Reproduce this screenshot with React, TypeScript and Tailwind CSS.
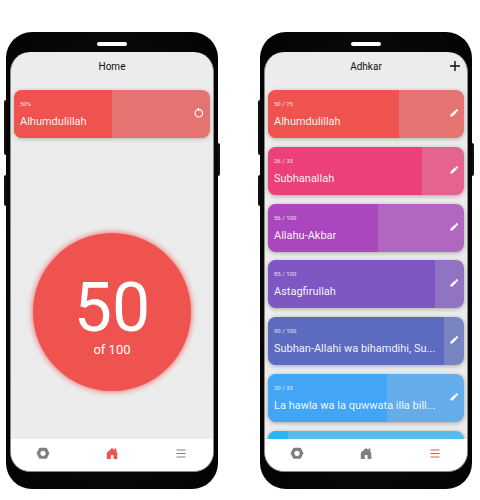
import type { ReactNode } from "react";

type Dhikr = {
  title: string;
  label: string;
  done: number;
  total: number;
  fill: string;
  track: string;
  glow: string;
};

const adhkar: Dhikr[] = [
  { title: "Alhumdulillah", label: "50 / 75", done: 50, total: 75, fill: "bg-[#ef5350]", track: "bg-[#e57371]", glow: "shadow-[#000000]/25" },
  { title: "Subhanallah", label: "26 / 33", done: 26, total: 33, fill: "bg-[#ec407a]", track: "bg-[#e4638f]", glow: "shadow-[#000000]/30" },
  { title: "Allahu-Akbar", label: "56 / 100", done: 56, total: 100, fill: "bg-[#ab47bc]", track: "bg-[#b167bf]", glow: "shadow-[#000000]/30" },
  { title: "Astagfirullah", label: "85 / 100", done: 85, total: 100, fill: "bg-[#7e57c2]", track: "bg-[#9073c3]", glow: "shadow-[#000000]/30" },
  { title: "Subhan-Allahi wa bihamdihi, Su...", label: "90 / 100", done: 90, total: 100, fill: "bg-[#5c6bc0]", track: "bg-[#7883c1]", glow: "shadow-[#000000]/30" },
  { title: "La hawla wa la quwwata illa bill...", label: "20 / 33", done: 20, total: 33, fill: "bg-[#42a5f5]", track: "bg-[#64adea]", glow: "shadow-[#000000]/30" },
  { title: "", label: "", done: 10, total: 100, fill: "bg-[#29b6f6]", track: "bg-[#54bdef]", glow: "shadow-[#000000]/30" },
];

function ResetIcon() {
  return (
    <svg viewBox="0 0 12 12" className="size-3" aria-hidden="true">
      <path d="M3.600 3.200A3.800 3.800 0 1 0 7.600 2.900L5 2.500" fill="none" stroke="currentColor" strokeWidth="1.100" />
      <path d="M3.200 2.300 6 .7v3.600z" fill="currentColor" />
    </svg>
  );
}

function PencilIcon() {
  return (
    <svg viewBox="0 0 10 10" className="size-[10px]" fill="currentColor" aria-hidden="true">
      <path d="M1.400 6.700 5.900 2.600 7.600 4.400 3.200 8.500H1.400zM6.300 2.200 7.300 1.300a.6.600 0 0 1 .8 0l.8.800a.6.600 0 0 1 0 .9L8 4z" />
    </svg>
  );
}

function SettingsIcon() {
  return (
    <svg viewBox="0 0 16 16" className="size-4" aria-hidden="true">
      <path
        fill="currentColor"
        fillRule="evenodd"
        d="M5 2.800h6a1 1 0 0 1 .9.5l2.300 4.500a1 1 0 0 1 0 1L11.900 13.300a1 1 0 0 1-.9.500H5a1 1 0 0 1-.9-.5L1.800 8.800a1 1 0 0 1 0-1L4.100 3.300a1 1 0 0 1 .9-.5zM8 5.700a2.600 2.600 0 1 0 0 5.200 2.600 2.600 0 0 0 0-5.200z"
      />
    </svg>
  );
}

function HomeIcon() {
  return (
    <svg viewBox="0 0 16 16" className="size-4" fill="currentColor" aria-hidden="true">
      <path d="M8 2.900 10.500 5V3.600h1.900v3.100l.9 1.100v5.700a.6.600 0 0 1-.6.600H9.600V10.600a.7.700 0 0 0-.7-.7H7.500a.7.700 0 0 0-.7.700v3.500H3.400a.6.600 0 0 1-.6-.6V7.800z" />
    </svg>
  );
}

function ListIcon() {
  return (
    <svg viewBox="0 0 16 16" className="size-4" stroke="currentColor" strokeWidth="1" aria-hidden="true">
      <path d="M3.500 5h9M3.500 8.500h9M3.500 12h9" />
    </svg>
  );
}

function DhikrCard({ item, action, icon }: { item: Dhikr; action: string; icon: ReactNode }) {
  const progress = `${(item.done / item.total) * 100}%`;
  return (
    <div className={`rounded-lg shadow-[0_1px_4px] ${item.glow}`}>
      <article className={`relative h-12 overflow-hidden rounded-lg ${item.track}`}>
        <div className={`h-full ${item.fill}`} style={{ width: progress }} />
        <div className="absolute inset-0 flex items-start justify-between pr-[5px] pl-[6px] text-white">
          <div className="min-w-0 pt-[10px]">
            <p className="text-[6px] leading-[8px] whitespace-nowrap text-white/80">{item.label}</p>
            <h2 className="pt-[6px] text-[11px] leading-4 whitespace-nowrap text-white/95">{item.title}</h2>
          </div>
          {item.title && (
            <button type="button" aria-label={action} className="flex h-[46px] shrink-0 items-center">
              {icon}
            </button>
          )}
        </div>
      </article>
    </div>
  );
}

function Phone({
  title,
  active,
  action,
  children,
}: {
  title: string;
  active: "home" | "list";
  action?: ReactNode;
  children: ReactNode;
}) {
  return (
    <section className="relative min-w-0 flex-1">
      <span className="absolute top-[68px] -left-[2px] h-[55px] w-1 rounded-l-xs bg-[#111111]" />
      <span className="absolute top-[143px] -left-[2px] h-[31px] w-1 rounded-l-xs bg-[#111111]" />
      <span className="absolute top-[111px] -right-[2px] h-[33px] w-1 rounded-r-xs bg-[#111111]" />
      <div className="relative rounded-[26px] bg-radial from-[#1b1b1b] to-[#030303] px-1 pb-[17px]">
        <div className="flex h-5 items-center justify-center pt-1">
          <span className="h-1 w-[30px] rounded-xs bg-white" />
        </div>
        <div className="flex h-[420px] flex-col overflow-hidden rounded-[20px] border-x border-b border-[#888888] bg-[#ececec]">
          <header className="relative flex h-7 shrink-0 items-center justify-center">
            <h1 className="pt-[2px] text-[10px] leading-4 text-[#111111]">{title}</h1>
            {action}
          </header>
          <main className="min-h-0 flex-1 overflow-hidden px-[3px] pt-[10px]">{children}</main>
          <nav className="flex h-8 shrink-0 items-start justify-between bg-white px-6 pt-[6px] text-[#808080]">
            <a href="#settings" aria-label="Settings">
              <SettingsIcon />
            </a>
            <a href="#home" aria-label="Home" className={active === "home" ? "text-[#ef5350]" : ""}>
              <HomeIcon />
            </a>
            <a href="#adhkar" aria-label="Adhkar" className={active === "list" ? "text-[#ef5350]" : ""}>
              <ListIcon />
            </a>
          </nav>
        </div>
      </div>
    </section>
  );
}

export default function App() {
  const current: Dhikr = { ...adhkar[0], label: "50%", total: 100 };
  return (
    <div className="flex min-h-screen items-start gap-[42px] bg-white pt-8 pr-2 pl-[6px] font-['Roboto','Liberation_Sans',sans-serif]">
      <Phone title="Home" active="home">
        <DhikrCard item={current} action="Reset" icon={<ResetIcon />} />
        <button
          type="button"
          className="mx-auto mt-[95px] flex size-[158px] flex-col items-center justify-center rounded-full bg-[#ef5350] pt-2 text-white shadow-[0_0_6px] shadow-[#ef5350]"
        >
          <span className="text-[68px] leading-[68px]">50</span>
          <span className="text-[13px] leading-4">of 100</span>
        </button>
      </Phone>
      <Phone
        title="Adhkar"
        active="list"
        action={
          <button type="button" aria-label="Add dhikr" className="absolute right-[6px] text-[#111111]">
            <svg viewBox="0 0 12 12" className="size-3" stroke="currentColor" strokeWidth="1.4" aria-hidden="true">
              <path d="M6 1v10M1 6h10" />
            </svg>
          </button>
        }
      >
        <div className="flex h-[389px] flex-col justify-between">
          {adhkar.map((item) => (
            <DhikrCard key={item.fill} item={item} action="Edit" icon={<PencilIcon />} />
          ))}
        </div>
      </Phone>
    </div>
  );
}
